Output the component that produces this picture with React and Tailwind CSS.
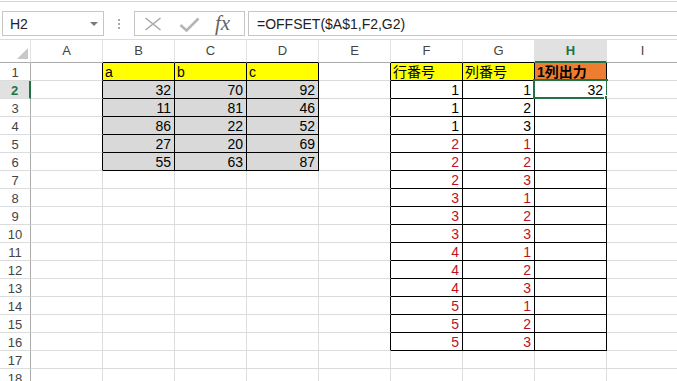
import React from "react";

const COLS = ["A", "B", "C", "D", "E", "F", "G", "H", "I"];
const T1 = [
  [32, 70, 92],
  [11, 81, 46],
  [86, 22, 52],
  [27, 20, 69],
  [55, 63, 87],
];

function inT(r, c) {
  return (r >= 1 && r <= 6 && c >= 1 && c <= 3) || (r >= 1 && r <= 16 && c >= 5 && c <= 7);
}

function cellInfo(r, c) {
  if (r === 1 && c >= 1 && c <= 3) return { text: ["a", "b", "c"][c - 1], align: "left", bg: "bg-[#ffff00]" };
  if (r >= 2 && r <= 6 && c >= 1 && c <= 3) return { text: String(T1[r - 2][c - 1]), align: "right", bg: "bg-[#d9d9d9]" };
  if (r === 1 && c === 5) return { text: "行番号", align: "left", bg: "bg-[#ffff00]" };
  if (r === 1 && c === 6) return { text: "列番号", align: "left", bg: "bg-[#ffff00]" };
  if (r === 1 && c === 7) return { text: "1列出力", align: "left", bg: "bg-[#ed7d31]", bold: true };
  if (r >= 2 && r <= 16 && c === 5) {
    const v = Math.floor((r - 2) / 3) + 1;
    return { text: String(v), align: "right", bg: "bg-white", red: r >= 5 };
  }
  if (r >= 2 && r <= 16 && c === 6) {
    const v = ((r - 2) % 3) + 1;
    return { text: String(v), align: "right", bg: "bg-white", red: r >= 5 };
  }
  if (r === 2 && c === 7) return { text: "32", align: "right", bg: "bg-white" };
  return { text: "", align: "left", bg: "bg-white" };
}

function Cell({ r, c }) {
  const info = cellInfo(r, c);
  const rb = inT(r, c) || inT(r, c + 1);
  const bb = inT(r, c) || inT(r + 1, c);
  return (
    <div
      className={
        "relative w-[72px] h-[18px] shrink-0 border-r border-b " +
        (rb ? "border-r-black " : "border-r-[#dadcdd] ") +
        (bb ? "border-b-black " : "border-b-[#dadcdd] ") +
        info.bg
      }
    >
      {info.text && (
        <div
          className={
            "pt-[3px] leading-[13px] text-[14px] whitespace-nowrap overflow-visible " +
            (info.align === "right" ? "text-right pr-[3px] " : "text-left pl-[2px] ") +
            (info.red ? "text-[#c0101c] " : "text-black ") +
            (info.bold ? "font-bold" : "")
          }
        >
          {info.text}
        </div>
      )}
      {r === 2 && c === 7 && (
        <div className="absolute left-[-2px] top-[-2px] w-[75px] h-[20px] border-2 border-[#217346]">
          <div className="absolute right-[-4px] bottom-[-4px] w-[6px] h-[6px] bg-[#217346] border border-white" />
        </div>
      )}
    </div>
  );
}

function Row({ r }) {
  const sel = r === 2;
  return (
    <div className="flex">
      <div
        className={
          "w-[31px] h-[18px] shrink-0 border-b border-b-[#dadcdd] text-center text-[13px] pt-[3px] leading-[14px] " +
          (sel
            ? "bg-[#e1e1e1] border-r-2 border-r-[#217346] text-[#217346] font-bold"
            : "bg-white border-r border-r-[#ababab] text-[#444]")
        }
      >
        {r}
      </div>
      {COLS.map((_, c) => (
        <Cell key={c} r={r} c={c} />
      ))}
    </div>
  );
}

export default function App() {
  const rows = [];
  for (let r = 1; r <= 18; r++) rows.push(r);
  return (
    <div className="w-[677px] h-[381px] overflow-hidden bg-white font-['Liberation_Sans','Noto_Sans_CJK_JP',sans-serif] text-[#222]">
      <div className="h-[2px] border-b border-[#d5d5d5]" />
      <div className="h-[38px] border-b border-[#dadcdd] flex items-start">
        <div className="mt-[9px] ml-[2px] w-[102px] h-[25px] border border-[#c6c6c6] flex items-center justify-between pl-[7px] pr-[5px] shrink-0">
          <span className="text-[14px] text-[#222] leading-none">H2</span>
          <svg width="8" height="4" viewBox="0 0 8 4">
            <polygon points="0,0 8,0 4,4" fill="#7a7a7a" />
          </svg>
        </div>
        <div className="w-[30px] h-[25px] mt-[9px] flex flex-col items-center justify-center gap-[2px] shrink-0">
          <div className="w-[2px] h-[2px] bg-[#a8a8a8]" />
          <div className="w-[2px] h-[2px] bg-[#a8a8a8]" />
          <div className="w-[2px] h-[2px] bg-[#a8a8a8]" />
        </div>
        <div className="mt-[9px] w-[111px] h-[25px] border border-[#c6c6c6] relative shrink-0">
          <svg className="absolute left-[9px] top-[5px]" width="18" height="14" viewBox="0 0 18 14">
            <line x1="1.5" y1="1" x2="16.5" y2="13" stroke="#a9a9a9" strokeWidth="1.6" />
            <line x1="16.5" y1="1" x2="1.5" y2="13" stroke="#a9a9a9" strokeWidth="1.6" />
          </svg>
          <svg className="absolute left-[44px] top-[5px]" width="21" height="15" viewBox="0 0 21 15">
            <polyline points="1.5,8 7.5,13.5 19.5,1.5" fill="none" stroke="#b5b5b5" strokeWidth="2.6" />
          </svg>
          <span className="absolute left-[80px] top-[-1px] font-['Liberation_Serif',serif] italic text-[21px] leading-[24px] text-[#646464]">
            fx
          </span>
        </div>
        <div className="mt-[9px] ml-[3px] flex-1 h-[25px] border border-r-0 border-[#c6c6c6] flex items-center pl-[8px]">
          <span className="text-[14px] text-[#222] leading-none whitespace-nowrap">=OFFSET($A$1,F2,G2)</span>
        </div>
      </div>
      <div className="flex">
        <div className="w-[31px] h-[23px] shrink-0 border-r border-r-[#e1e1e1] border-b border-b-[#ababab] relative bg-white">
          <svg className="absolute left-[17px] top-[8px]" width="11" height="11" viewBox="0 0 11 11">
            <polygon points="11,0 11,11 0,11" fill="#c8c8c8" />
          </svg>
        </div>
        {COLS.map((L, c) => {
          const sel = c === 7;
          const bb = inT(1, c);
          return (
            <div
              key={L}
              className={
                "w-[72px] h-[23px] shrink-0 border-r border-r-[#e1e1e1] text-center text-[13px] leading-[22px] " +
                (sel
                  ? "bg-[#e1e1e1] border-b-2 border-b-[#217346] text-[#217346] font-bold"
                  : "bg-white border-b text-[#444] " + (bb ? "border-b-black" : "border-b-[#ababab]"))
              }
            >
              {L}
            </div>
          );
        })}
      </div>
      {rows.map((r) => (
        <Row key={r} r={r} />
      ))}
    </div>
  );
}
